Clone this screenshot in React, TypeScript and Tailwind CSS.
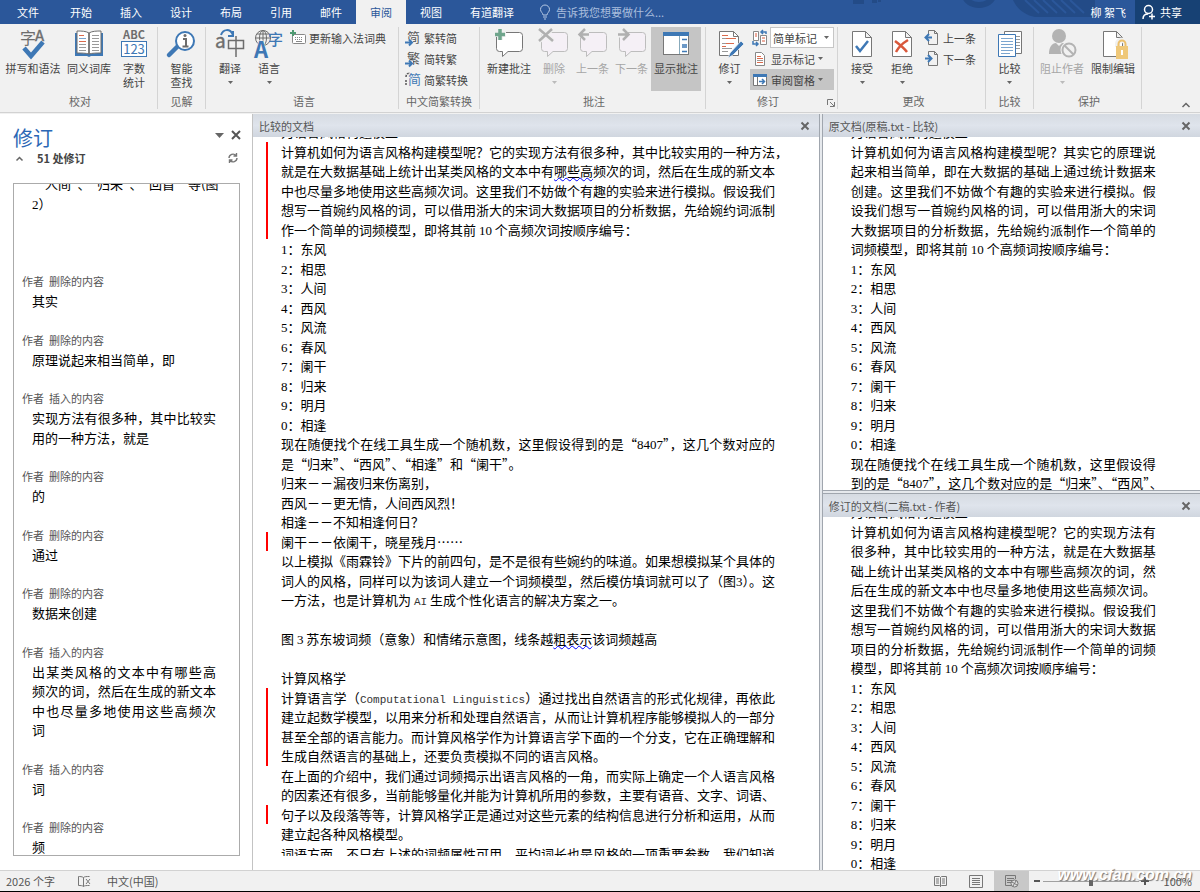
import React from "react";

type IconProps = { children: React.ReactNode; w?: number; h?: number; className?: string };

function Icon({ children, w = 34, h = 34, className = "" }: IconProps) {
  return (
    <svg width={w} height={h} viewBox={`0 0 ${w} ${h}`} fill="none" aria-hidden="true" className={`shrink-0 overflow-visible ${className}`}>
      {children}
    </svg>
  );
}

const GRAY = "#6d6d6d";
const BLUE = "#3e78b5";
const CJK = "'Noto Sans CJK SC', sans-serif";

const Caret = ({ color = "#666666" }: { color?: string }) => (
  <Icon w={5} h={3}>
    <path d="M0 0h5L2.5 3z" fill={color} />
  </Icon>
);

/* ---------- Large ribbon icons ---------- */

const SpellIcon = () => (
  <Icon>
    <text x="4" y="17" fontSize="16" fill={GRAY} fontFamily={CJK}>字</text>
    <text x="19" y="14" fontSize="15" fill={GRAY} stroke={GRAY} strokeWidth=".4" fontFamily={CJK}>A</text>
    <path d="M8 21l7 8L27 15" stroke="#f1f1f1" strokeWidth="6.500" />
    <path d="M8 21l7 8L27 15" stroke={BLUE} strokeWidth="4.500" />
  </Icon>
);

const BookIcon = () => (
  <Icon>
    <path d="M3 6h28v23H19l-2 1-2-1H3z" fill={BLUE} />
    <path d="M5 4c4 0 9 0 12 2v21c-3-1-8-1-12-1zM29 4c-4 0-9 0-12 2v21c3-1 8-1 12-1z" fill="#fff" stroke={GRAY} />
    <path d="M17 6v21" stroke={GRAY} />
    <path d="M7 17.500h7M20 8.500h7M20 11.500h7M20 14.500h7M20 17.500h7M20 20.500h7M7 20.500h7M7 23.500h7M20 23.500h7" stroke="#9a9a9a" />
    <path d="M7 8.500h5M7 14.500h7" stroke="#dc6b4c" />
    <path d="M7 11.500h7" stroke="#7ba5cf" />
  </Icon>
);

const CountIcon = () => (
  <Icon>
    <text x="17" y="12" textAnchor="middle" fontSize="11" fontWeight="700" fill={GRAY} fontFamily={CJK}>ABC</text>
    <rect x="4.5" y="14.5" width="25" height="15" fill="#fff" stroke={BLUE} />
    <text x="17" y="27" textAnchor="middle" fontSize="13" fill={BLUE} fontFamily={CJK}>123</text>
  </Icon>
);

const LookupIcon = () => (
  <Icon>
    <path d="M12 20l-8 8" stroke={BLUE} strokeWidth="4.5" strokeLinecap="round" />
    <circle cx="20" cy="14" r="9" fill="#fff" stroke={BLUE} strokeWidth="2" />
    <path d="M18 12h3v7M17.500 19.500h6" stroke={GRAY} strokeWidth="2" />
    <circle cx="20" cy="8.500" r="1.500" fill={GRAY} />
  </Icon>
);

const TranslateIcon = () => (
  <Icon>
    <text x="2" y="21" fontSize="19" fill={GRAY} stroke={GRAY} strokeWidth=".4" fontFamily={CJK}>a</text>
    <path d="M15.500 13.500h15v8h-15zM23 9v21" stroke={GRAY} strokeWidth="1.500" />
    <path d="M8 8c2-6 9-7 12 0M20 9v-5M21 9h-6" stroke={BLUE} strokeWidth="2" />
  </Icon>
);

const LanguageIcon = () => (
  <Icon>
    <circle cx="11" cy="11" r="7.500" stroke={GRAY} />
    <ellipse cx="11" cy="11" rx="3.500" ry="7.500" stroke={GRAY} />
    <path d="M3.500 11h15M5 7h12M11 3.500v15" stroke={GRAY} />
    <text x="2" y="31" fontSize="22" fontWeight="700" fill={BLUE} stroke="#f1f1f1" strokeWidth="1" paintOrder="stroke" fontFamily={CJK}>A</text>
    <text x="16" y="18" fontSize="15" fontWeight="500" fill={BLUE} fontFamily={CJK}>字</text>
  </Icon>
);

const BUBBLE = "M7.500 5.500h20a3 3 0 0 1 3 3v13a3 3 0 0 1-3 3H16l-5.500 5v-5h-3a3 3 0 0 1-3-3v-13a3 3 0 0 1 3-3z";

const NewCommentIcon = () => (
  <Icon>
    <path d={BUBBLE} fill="#fff" stroke="#777" />
    <path d="M8 1v12M2 7h12" stroke="#f1f1f1" strokeWidth="6" />
    <path d="M8 2v11M3 7.500h10" stroke="#6fa58c" strokeWidth="3.500" />
  </Icon>
);

const DeleteCommentIcon = () => (
  <Icon>
    <path d={BUBBLE} fill="#f5f0f6" stroke="#bdbdbd" />
    <path d="M2 2l14 12M15 2L2 14" stroke="#f1f1f1" strokeWidth="5" />
    <path d="M2 2l14 12M15 2L2 14" stroke="#b0b0b0" strokeWidth="2.500" />
  </Icon>
);

const PrevCommentIcon = () => (
  <Icon>
    <path d={BUBBLE} fill="#f5f0f6" stroke="#bdbdbd" />
    <path d="M4 7.500h9" stroke="#f1f1f1" strokeWidth="6" />
    <path d="M4 7.500h9M9 2L3.500 7.500 9 13" stroke="#b0b0b0" strokeWidth="2.500" />
  </Icon>
);

const NextCommentIcon = () => (
  <Icon>
    <path d={BUBBLE} fill="#f5f0f6" stroke="#bdbdbd" />
    <path d="M3 7.500h10" stroke="#f1f1f1" strokeWidth="6" />
    <path d="M3 7.500h10M8 2l5.500 5.500L8 13" stroke="#b0b0b0" strokeWidth="2.500" />
  </Icon>
);

const ShowCommentsIcon = () => (
  <Icon>
    <rect x="4.500" y="5.500" width="25" height="22" fill="#fff" stroke="#777" />
    <path d="M4 5h26v4H4z" fill={BLUE} />
    <path d="M20.500 9v18" stroke="#8ab" />
    <path d="M23 12.500h5M23 18h5M23 20h5M23 24.500h5" stroke={BLUE} strokeWidth="1.500" />
  </Icon>
);

const TrackIcon = () => (
  <Icon>
    <path d="M6.500 4.500h14l5 5v19h-19z" fill="#fff" stroke="#777" />
    <path d="M20.500 4.500v5h5" stroke="#777" />
    <path d="M9 11.500h4M9 16.500h4M9 21.500h10M9 24.500h6" stroke="#999" />
    <path d="M9 8.500h6M13 11.500h10M13 16.500h8M9 19.500h4" stroke="#dc6b4c" />
    <path d="M15 31l2-5L28 14l3 3-11 11z" fill={BLUE} stroke="#f1f1f1" strokeWidth=".8" />
  </Icon>
);

const PAGE = "M7.500 4.500h13l6 6v19h-19zM20.500 4.500v6h6";

const AcceptIcon = () => (
  <Icon>
    <path d={PAGE} fill="#fff" stroke="#777" />
    <path d="M11 19l4 5 8-10" stroke={BLUE} strokeWidth="2.500" />
  </Icon>
);

const RejectIcon = () => (
  <Icon>
    <path d={PAGE} fill="#fff" stroke="#777" />
    <path d="M10 14c4 3 9 7 12 11M23 13c-5 3-10 8-12 12" stroke="#d9583b" strokeWidth="2.500" />
  </Icon>
);

const CompareIcon = () => (
  <Icon>
    <path d="M11.500 4.500h17v22h-17z" fill="#fff" stroke="#777" />
    <path d="M23 9.500h4M23 12.500h4M23 15.500h4M23 18.500h4M23 21.500h4" stroke="#999" />
    <path d="M5.500 7.500h17v22h-17z" fill="#fff" stroke={BLUE} />
    <path d="M8 11.500h12M8 14.500h12M8 17.500h12M8 20.500h12M8 23.500h12M8 26.500h9" stroke="#7ba5cf" />
  </Icon>
);

const BlockIcon = () => (
  <Icon>
    <circle cx="14" cy="9" r="7" fill="#b3b3b3" />
    <path d="M4 27c0-7 3-11 7-11l3 3 3-3c3 0 5 2 6 4v7z" fill="#b3b3b3" />
    <circle cx="24" cy="23" r="8.500" fill="#f1f1f1" />
    <circle cx="24" cy="23" r="6.500" stroke="#b3b3b3" strokeWidth="2" />
    <path d="M19.500 18.500l9 9" stroke="#b3b3b3" strokeWidth="2" />
  </Icon>
);

const RestrictIcon = () => (
  <Icon>
    <path d="M7.500 4.500h13l6 6v19h-19zM20.500 4.500v6h6" fill="#fff" stroke="#777" />
    <path d="M21.500 20v-3a4 4 0 0 1 8 0v3" stroke="#f1f1f1" strokeWidth="5" />
    <path d="M22.500 20v-3a3.500 3.500 0 0 1 7 0v3" stroke="#ecc06c" strokeWidth="2" />
    <rect x="20" y="19" width="12" height="13" fill="#efc879" />
    <path d="M26 23v5" stroke="#fff" strokeWidth="2" />
  </Icon>
);

/* ---------- Small ribbon icons ---------- */

const KeyboardIcon = () => (
  <Icon w={16} h={16}>
    <rect x="2.500" y="4.500" width="13" height="9" rx="1" fill="#fff" stroke="#888" />
    <path d="M5 7.500h8M5 9.500h8" stroke="#888" strokeDasharray="1 1" />
    <path d="M6 11.500h6" stroke="#888" />
    <path d="M3 0v6M0 3h6" stroke="#4f9a72" strokeWidth="2" />
  </Icon>
);

function ConvertIcon({ glyph, kind }: { glyph: string; kind: "arrow" | "both" }) {
  return (
    <Icon w={16} h={16}>
      <text x={kind === "both" ? 3 : 2} y="12" fontSize="13" fill={kind === "both" ? BLUE : "#555"} fontFamily={CJK}>{glyph}</text>
      {kind === "arrow" ? (
        <>
          <path d="M0 12.500h8" stroke="#f1f1f1" strokeWidth="6" />
          <path d="M0 12.500h6M4 9.500l3 3-3 3" stroke={BLUE} strokeWidth="2" />
        </>
      ) : (
        <path d="M1 5c0-3 2-4 4-4M1 8v5" stroke="#555" strokeWidth="1.500" strokeDasharray="2 1" />
      )}
    </Icon>
  );
}

const MarkupIcon = () => (
  <Icon w={16} h={16}>
    <path d="M1.500 1.500h5v9h-5zM8.500 5.500h6v9h-6z" fill="#fff" stroke="#888" />
    <path d="M3 4h2M3 6h2M10 8h3M10 11h3" stroke="#d9583b" />
    <path d="M9 2h5v2M11 0L9 2l2 2M1 11v3h5M4 12l2 2-2 2" stroke={BLUE} strokeWidth="1.500" />
  </Icon>
);

const ShowMarkupIcon = () => (
  <Icon w={16} h={16}>
    <path d="M3.500 1.500h6l3 3v10h-9z" fill="#fff" stroke="#888" />
    <path d="M5 5.500h4M5 7.500h6M5 11.500h6" stroke="#dc6b4c" />
    <path d="M5 9.500h6" stroke="#999" />
  </Icon>
);

const PaneIcon = () => (
  <Icon w={16} h={16}>
    <path d="M1.500 2.500h13v11h-13z" fill="#fff" stroke="#777" />
    <path d="M1 2h14v3H1z" fill={BLUE} />
    <path d="M5.500 5v8" stroke="#777" />
    <path d="M7 9.500h5M10 7l2.500 2.500L10 12" stroke={BLUE} strokeWidth="1.500" />
  </Icon>
);

function PageArrowIcon({ dir }: { dir: "left" | "right" }) {
  return (
    <Icon w={16} h={16}>
      <path d="M4.500 4V.500h6l3 3v11h-9V11M10.500.500v3h3" stroke="#777" />
      {dir === "left" ? (
        <path d="M2 7.500h6M5 4L1.500 7.500 5 11" stroke={BLUE} strokeWidth="2" />
      ) : (
        <path d="M1 7.500h6M4 4l3.500 3.500L4 11" stroke={BLUE} strokeWidth="2" />
      )}
    </Icon>
  );
}

/* ---------- Ribbon building blocks ---------- */

type BigProps = { icon: React.ReactNode; label: string; second?: string; caret?: boolean; width: string; disabled?: boolean; active?: boolean };

function BigButton({ icon, label, second, caret, width, disabled, active }: BigProps) {
  return (
    <button
      disabled={disabled}
      className={`flex h-16 shrink-0 flex-col items-center whitespace-nowrap ${width} ${disabled ? "text-[#a6a6a6]" : "text-[#444444]"} ${active ? "bg-[#c5c5c5]" : ""}`}
    >
      {icon}
      <span className="leading-[14px]">{label}</span>
      {second && <span className="leading-[14px]">{second}</span>}
      {caret && (
        <span className="flex h-[14px] items-center">
          <Caret color={disabled ? "#bbbbbb" : "#666666"} />
        </span>
      )}
    </button>
  );
}

function SmallButton({ icon, label, caret, active }: { icon: React.ReactNode; label: string; caret?: boolean; active?: boolean }) {
  return (
    <button className={`flex h-[21px] items-center gap-[3px] whitespace-nowrap pl-[2px] pr-1 ${active ? "bg-[#c5c5c5]" : ""}`}>
      {icon}
      <span>{label}</span>
      {caret && <Caret />}
    </button>
  );
}

function Group({ title, width, children, corner }: { title: string; width: string; children: React.ReactNode; corner?: boolean }) {
  return (
    <section aria-label={title} className={`flex shrink-0 flex-col py-[3px] ${width}`}>
      <div className="flex grow flex-col border-r border-[#d4d4d4]">
        <div className="flex grow items-start">{children}</div>
        <div className="flex h-4 items-center">
          <span className="grow text-center text-[#666666]">{title}</span>
          {corner && (
            <button aria-label="修订选项" className="mr-[2px] mt-1">
              <Icon w={8} h={8}>
                <path d="M.5 6V.5H6M3 3l4 4M7.500 3v4.500H3" stroke="#777" />
              </Icon>
            </button>
          )}
        </div>
      </div>
    </section>
  );
}

/* ---------- Title bar ---------- */

const TABS = ["开始", "插入", "设计", "布局", "引用", "邮件", "审阅", "视图"];

function TitleBar() {
  return (
    <header className="relative flex h-6 shrink-0 items-stretch bg-[#2b579a] text-white">
      <svg className="pointer-events-none absolute right-[65px] top-0" width="300" height="24" aria-hidden="true">
        <g fill="#234b87">
          <path d="M18 0h11v4H18zM37 0h5v3h-5zM43 0h3v2h-3z" />
          <path d="M178 0h82v17h-60c-10-2-18-8-22-17z" />
        </g>
        <path d="M130 -5a14 10 0 0 0 28 0" stroke="#234b87" strokeWidth="6" fill="none" />
        <path d="M190 0l14 13M199 0l14 13M208 0l14 13M217 0l14 13M226 0l14 13M235 0l14 13" stroke="#2b579a" strokeWidth="2" />
      </svg>
      <nav className="flex" aria-label="功能区">
        <button className="w-14">文件</button>
        {TABS.map((t) => (
          <button key={t} className={`w-[50px] ${t === "审阅" ? "bg-[#f1f1f1] text-[#2b579a]" : ""}`}>
            {t}
          </button>
        ))}
        <button className="w-[72px]">有道翻译</button>
      </nav>
      <label className="flex grow items-center gap-[6px] pl-[12px]">
        <Icon w={10} h={15}>
          <path d="M3 10c0-2-2.500-3-2.500-5.500a4.500 4.500 0 0 1 9 0C9.500 7 7 8 7 10zM3 12h4M4 14h2" stroke="#b5c8e3" />
        </Icon>
        <input
          aria-label="操作说明搜索"
          placeholder="告诉我您想要做什么..."
          className="h-5 w-40 bg-transparent placeholder:text-[#a9bedd] focus:outline-none"
        />
      </label>
      <button className="relative px-[9px]">柳 絮飞</button>
      <button className="relative flex w-[65px] items-center gap-1 bg-[#174174] pl-[7px]">
        <Icon w={14} h={16}>
          <circle cx="6.500" cy="5.500" r="4" stroke="#fff" strokeWidth="1.500" />
          <path d="M1 15c0-3 2-5 5-5M7 12.500h6M10 9.500v6" stroke="#fff" strokeWidth="1.500" />
        </Icon>
        共享
      </button>
    </header>
  );
}

function Ribbon() {
  return (
    <div className="relative flex h-[89px] shrink-0 border-b border-[#d2d2d2] bg-[#f1f1f1] text-[#444444]">
      <Group title="校对" width="w-[158px] pl-[3px]">
        <BigButton width="w-[60px]" icon={<SpellIcon />} label="拼写和语法" />
        <BigButton width="w-[52px]" icon={<BookIcon />} label="同义词库" />
        <BigButton width="w-[38px]" icon={<CountIcon />} label="字数" second="统计" />
      </Group>
      <Group title="见解" width="w-12">
        <BigButton width="w-full" icon={<LookupIcon />} label="智能" second="查找" />
      </Group>
      <Group title="语言" width="w-[193px] pl-1">
        <BigButton width="w-[40px]" icon={<TranslateIcon />} label="翻译" caret />
        <BigButton width="w-[38px]" icon={<LanguageIcon />} label="语言" caret />
        <SmallButton icon={<KeyboardIcon />} label="更新输入法词典" />
      </Group>
      <Group title="中文简繁转换" width="w-[81px]">
        <div className="flex flex-col pl-1">
          <SmallButton icon={<ConvertIcon glyph="简" kind="arrow" />} label="繁转简" />
          <SmallButton icon={<ConvertIcon glyph="繁" kind="arrow" />} label="简转繁" />
          <SmallButton icon={<ConvertIcon glyph="简" kind="both" />} label="简繁转换" />
        </div>
      </Group>
      <Group title="批注" width="w-[226px] pl-[3px]">
        <BigButton width="w-[52px]" icon={<NewCommentIcon />} label="新建批注" />
        <BigButton width="w-[38px]" icon={<DeleteCommentIcon />} label="删除" caret disabled />
        <BigButton width="w-[39px]" icon={<PrevCommentIcon />} label="上一条" disabled />
        <BigButton width="w-[39px]" icon={<NextCommentIcon />} label="下一条" disabled />
        <BigButton width="w-[50px]" icon={<ShowCommentsIcon />} label="显示批注" active />
      </Group>
      <Group title="修订" width="w-[132px] pl-[3px]" corner>
        <BigButton width="w-[41px]" icon={<TrackIcon />} label="修订" caret />
        <div className="flex w-[84px] flex-col">
          <div className="flex h-[21px] items-center gap-[2px] pl-[2px]">
            <MarkupIcon />
            <span className="grid h-[21px] grow grid-cols-1 items-center border border-[#c6c6c6] bg-white">
              <select aria-label="显示以供审阅" className="col-start-1 row-start-1 w-full appearance-none bg-transparent pl-[2px] focus:outline-none">
                <option>简单标记</option>
                <option>所有标记</option>
              </select>
              <span className="pointer-events-none col-start-1 row-start-1 justify-self-end pr-1">
                <Caret />
              </span>
            </span>
          </div>
          <SmallButton icon={<ShowMarkupIcon />} label="显示标记" caret />
          <SmallButton icon={<PaneIcon />} label="审阅窗格" caret active />
        </div>
      </Group>
      <Group title="更改" width="w-[148px] pl-1">
        <BigButton width="w-10" icon={<AcceptIcon />} label="接受" caret />
        <BigButton width="w-10" icon={<RejectIcon />} label="拒绝" caret />
        <div className="flex flex-col">
          <SmallButton icon={<PageArrowIcon dir="left" />} label="上一条" />
          <SmallButton icon={<PageArrowIcon dir="right" />} label="下一条" />
        </div>
      </Group>
      <Group title="比较" width="w-12">
        <BigButton width="w-full" icon={<CompareIcon />} label="比较" caret />
      </Group>
      <Group title="保护" width="w-[108px] pl-[3px]">
        <BigButton width="w-[50px]" icon={<BlockIcon />} label="阻止作者" caret disabled />
        <BigButton width="w-[52px]" icon={<RestrictIcon />} label="限制编辑" />
      </Group>
      <button aria-label="折叠功能区" className="mb-1 ml-auto mr-[10px] self-end">
        <Icon w={8} h={6}>
          <path d="M.5 5L4 1.500 7.500 5" stroke="#666" strokeWidth="1.500" />
        </Icon>
      </button>
    </div>
  );
}

/* ---------- Document text ---------- */

/* Letters and digits are set in half-width faces; [[...]] marks a wavy underline. */
function Rich({ text }: { text: string }) {
  const parts = text.split(/(\[\[.+?\]\]|[A-Za-z]+(?: [A-Za-z]+)*|[0-9]+)/);
  return (
    <>
      {parts.map((p, i) => {
        if (p.startsWith("[["))
          return (
            <span key={i} className="underline decoration-[#0000ff] decoration-wavy decoration-1 underline-offset-1">
              {p.slice(2, -2)}
            </span>
          );
        if (/^[A-Za-z]/.test(p))
          return (
            <span key={i} className="font-['Liberation_Mono',monospace] text-[11px] text-[#333333]">
              {p}
            </span>
          );
        if (/^[0-9]/.test(p))
          return (
            <span key={i} className="font-['Liberation_Serif',serif]">
              {p}
            </span>
          );
        return p;
      })}
    </>
  );
}

/* fill: the row runs the full measure; mark: change bar in the margin */
type Row = { t: string; fill?: boolean; mark?: boolean };

const f = (t: string, mark = false): Row => ({ t, fill: true, mark });
const n = (t: string, mark = false): Row => ({ t, mark });

const WORDS: Row[] = ["1：东风", "2：相思", "3：人间", "4：西风", "5：风流", "6：春风", "7：阑干", "8：归来", "9：明月", "0：相逢"].map((t) => n(t));

const COMPARED: Row[] = [
  n("为语言风格构造模型"),
  f("计算机如何为语言风格构建模型呢？它的实现方法有很多种，其中比较实用的一种方法，", true),
  f("就是在大数据基础上统计出某类风格的文本中有[[哪些高]]频次的词，然后在生成的新文本", true),
  f("中也尽量多地使用这些高频次词。这里我们不妨做个有趣的实验来进行模拟。假设我们", true),
  f("想写一首婉约风格的词，可以借用浙大的宋词大数据项目的分析数据，先给婉约词派制", true),
  n("作一个简单的词频模型，即将其前 10 个高频次词按顺序编号：", true),
  ...WORDS,
  f("现在随便找个在线工具生成一个随机数，这里假设得到的是“8407”，这几个数对应的"),
  n("是“归来”、“西风”、“相逢”和“阑干”。"),
  n("归来－－漏夜归来伤离别，"),
  n("西风－－更无情，人间西风烈！"),
  n("相逢－－不知相逢何日？"),
  n("阑干－－依阑干，晓星残月……", true),
  f("以上模拟《雨霖铃》下片的前四句，是不是很有些婉约的味道。如果想模拟某个具体的"),
  f("词人的风格，同样可以为该词人建立一个词频模型，然后模仿填词就可以了（图3）。这"),
  n("一方法，也是计算机为 AI 生成个性化语言的解决方案之一。"),
  n(""),
  n("图 3 苏东坡词频（意象）和情绪示意图，线条越[[粗表示]]该词频越高"),
  n(""),
  n("计算风格学"),
  f("计算语言学（Computational Linguistics）通过找出自然语言的形式化规律，再依此", true),
  f("建立起数学模型，以用来分析和处理自然语言，从而让计算机程序能够模拟人的一部分", true),
  f("甚至全部的语言能力。而计算风格学作为计算语言学下面的一个分支，它在正确理解和", true),
  n("生成自然语言的基础上，还要负责模拟不同的语言风格。", true),
  f("在上面的介绍中，我们通过词频揭示出语言风格的一角，而实际上确定一个人语言风格"),
  f("的因素还有很多，当前能够量化并能为计算机所用的参数，主要有语音、文字、词语、"),
  f("句子以及段落等等，计算风格学正是通过对这些元素的结构信息进行分析和运用，从而", true),
  n("建立起各种风格模型。"),
  f("词语方面，不只有上述的词频属性可用，平均词长也是风格的一项重要参数，我们知道"),
];

const ORIGINAL: Row[] = [
  n("为语言风格构造模型"),
  f("计算机如何为语言风格构建模型呢？其实它的原理说"),
  f("起来相当简单，即在大数据的基础上通过统计数据来"),
  f("创建。这里我们不妨做个有趣的实验来进行模拟。假"),
  f("设我们想写一首婉约风格的词，可以借用浙大的宋词"),
  f("大数据项目的分析数据，先给婉约派制作一个简单的"),
  n("词频模型，即将其前 10 个高频词按顺序编号："),
  ...WORDS,
  f("现在随便找个在线工具生成一个随机数，这里假设得"),
  f("到的是“8407”，这几个数对应的是“归来”、“西风”、"),
];

const REVISED: Row[] = [
  n("为语言风格构造模型"),
  f("计算机如何为语言风格构建模型呢？它的实现方法有"),
  f("很多种，其中比较实用的一种方法，就是在大数据基"),
  f("础上统计出某类风格的文本中有哪些高频次的词，然"),
  f("后在生成的新文本中也尽量多地使用这些高频次词。"),
  f("这里我们不妨做个有趣的实验来进行模拟。假设我们"),
  f("想写一首婉约风格的词，可以借用浙大的宋词大数据"),
  f("项目的分析数据，先给婉约词派制作一个简单的词频"),
  n("模型，即将其前 10 个高频次词按顺序编号："),
  ...WORDS,
];

function Lines({ rows, measure }: { rows: Row[]; measure: string }) {
  return (
    <div className={`-mt-[15px] text-[13px] text-black ${measure}`}>
      {rows.map((r, i) => (
        <p
          key={i}
          className={`whitespace-nowrap border-l-2 pl-[13px] odd:h-5 odd:leading-5 even:h-[19px] even:leading-[19px] ${r.mark ? "border-[#ff0000]" : "border-transparent"} ${r.fill ? "[text-align-last:justify]" : ""}`}
        >
          <Rich text={r.t} />
        </p>
      ))}
    </div>
  );
}

function CloseIcon() {
  return (
    <Icon w={10} h={10}>
      <path d="M1.500 1.500l7 7M8.500 1.500l-7 7" stroke="#666" strokeWidth="2" />
    </Icon>
  );
}

function DocPane({ title, children }: { title: string; children: React.ReactNode }) {
  return (
    <section className="flex min-h-0 min-w-0 flex-1 flex-col bg-white">
      <div className="flex h-[23px] shrink-0 items-center justify-between bg-linear-to-b from-[#d6dbe2] via-[#dfe4ec] to-[#d0d6df] pl-[6px] pr-[9px] text-[#555555]">
        <h2>{title}</h2>
        <button aria-label={`关闭${title}`}>
          <CloseIcon />
        </button>
      </div>
      {children}
    </section>
  );
}

/* ---------- Revision pane ---------- */

type Rev = { kind: string; body: string[] };

const REVS: Rev[] = [
  { kind: "删除的内容", body: ["其实"] },
  { kind: "删除的内容", body: ["原理说起来相当简单，即"] },
  { kind: "插入的内容", body: ["实现方法有很多种，其中比较实", "用的一种方法，就是"] },
  { kind: "删除的内容", body: ["的"] },
  { kind: "删除的内容", body: ["通过"] },
  { kind: "删除的内容", body: ["数据来创建"] },
  { kind: "插入的内容", body: ["出某类风格的文本中有哪些高", "频次的词，然后在生成的新文本", "中也尽量多地使用这些高频次", "词"] },
  { kind: "插入的内容", body: ["词"] },
  { kind: "删除的内容", body: ["频"] },
];

const REV_ROWS: { head?: boolean; t: string; fill?: boolean }[] = [
  { t: "“人间”、“归来”、“回首”等(图", fill: true },
  { t: "2）" },
  { t: "" },
  { t: "" },
  { t: "" },
  ...REVS.flatMap((r) => [
    { head: true, t: `作者  ${r.kind}` },
    ...r.body.map((t, i) => ({ t, fill: i < r.body.length - 1 })),
    { t: "" },
  ]),
];

function RevisionPane() {
  return (
    <aside className="flex w-[253px] shrink-0 flex-col border-r border-[#c3c3c3] bg-white pb-[14px] pl-[13px] pr-3 pt-3">
      <div className="flex h-6 items-start">
        <h1 className="grow text-[20px] leading-6 text-[#2b67b5]">修订</h1>
        <button aria-label="窗格选项" className="mr-[7px] flex h-[18px] items-center">
          <Icon w={9} h={5}>
            <path d="M0 0h9L4.500 5z" fill="#666" />
          </Icon>
        </button>
        <button aria-label="关闭" className="-mr-px flex h-[18px] items-center">
          <Icon w={10} h={10}>
            <path d="M1 1l8 8M9 1L1 9" stroke="#555" strokeWidth="2" />
          </Icon>
        </button>
      </div>
      <div className="flex h-4 items-center pl-[3px]">
        <button aria-label="折叠">
          <Icon w={7} h={5}>
            <path d="M.5 4.500l3-3 3 3" stroke="#666" strokeWidth="1.500" />
          </Icon>
        </button>
        <span className="ml-[14px] grow font-bold text-[#444444]">51 处修订</span>
        <button aria-label="刷新" className="mr-[2px]">
          <Icon w={10} h={10}>
            <path d="M1 5a4 4 0 0 1 7-2.500M9 5a4 4 0 0 1-7 2.500M8.500 0v3h-3M1.500 10V7h3" stroke="#777" strokeWidth="1.400" />
          </Icon>
        </button>
      </div>
      <div className="mt-[17px] min-h-0 grow overflow-hidden border border-[#ababab] pl-2">
        <div className="-mt-[10px] w-[194px] text-[13px] text-black">
          {REV_ROWS.map((r, i) => (
            <p
              key={i}
              className={`whitespace-pre odd:h-5 odd:leading-5 even:h-[19px] even:leading-[19px] ${r.head ? "text-[11px] text-[#555555]" : "pl-[10px]"} ${r.fill ? "[text-align-last:justify]" : ""}`}
            >
              {r.head ? r.t : <Rich text={r.t} />}
            </p>
          ))}
        </div>
      </div>
    </aside>
  );
}

function StatusBar() {
  return (
    <footer className="relative flex h-[22px] shrink-0 items-stretch border-b border-t border-b-black border-t-[#d2d2d2] bg-[#f1f1f1] text-[#555555]">
      <span className="flex w-[77px] items-center pl-[6px]">2026 个字</span>
      <button aria-label="校对" className="flex w-[30px] items-center">
        <Icon w={15} h={13}>
          <path d="M6.500 2.500C5 1.500 3 1.500 1.500 1.500v9c2 0 4 0 5 1zM6.500 2.500c1-1 3-1 6-1M6.500 11.500c1-1 3-1 6-1M9 4l4 5M13 4L9 9" stroke="#777" />
        </Icon>
      </button>
      <button className="grow text-left">中文(中国)</button>
      <button aria-label="阅读视图" className="flex w-[36px] items-center justify-center">
        <Icon w={13} h={13}>
          <path d="M6.500 2.500l-1-1h-5v9h5l1 1 1-1h5v-9h-5zM6.500 2.500v9M2 4h3M2 6h3M2 8h3M8 4h3M8 6h3M8 8h3" stroke="#777" />
        </Icon>
      </button>
      <button aria-label="页面视图" className="flex w-[36px] items-center justify-center">
        <Icon w={14} h={13}>
          <path d="M.5.5h13v12H.5zM3 3.500h8M3 5.500h8M3 7.500h8M3 9.500h8" stroke="#777" />
        </Icon>
      </button>
      <button aria-label="Web 版式视图" className="flex w-[35px] items-center justify-center bg-[#c8c8c8]">
        <Icon w={14} h={13}>
          <path d="M7 10.500H.5V.500h10V4M2 3.500h7M2 5.500h5M2 7.500h4" stroke="#777" />
          <circle cx="9.500" cy="8.500" r="3.500" fill="#ddd" stroke="#777" />
          <path d="M7 7l5 3M8 11l3-5" stroke="#777" />
        </Icon>
      </button>
      <div className="flex items-center gap-[2px] pl-1">
        <button aria-label="缩小" className="w-2">
          <Icon w={8} h={8}>
            <path d="M1 4h6" stroke="#555" strokeWidth="2" />
          </Icon>
        </button>
        <input
          type="range"
          aria-label="缩放"
          defaultValue={50}
          className="h-4 w-[96px] appearance-none bg-[linear-gradient(#a0a0a0,#a0a0a0)] bg-[length:100%_1px] bg-center bg-no-repeat [&::-webkit-slider-thumb]:h-[10px] [&::-webkit-slider-thumb]:w-1 [&::-webkit-slider-thumb]:appearance-none [&::-webkit-slider-thumb]:bg-[#666666]"
        />
        <button aria-label="放大" className="w-2">
          <Icon w={8} h={8}>
            <path d="M0 4h8M4 0v8" stroke="#555" strokeWidth="2" />
          </Icon>
        </button>
      </div>
      <span className="relative z-10 flex w-[51px] items-center justify-end pr-2">100%</span>
      <span className="pointer-events-none absolute -top-[6px] right-2 whitespace-nowrap font-['Liberation_Sans',sans-serif] text-[16px] font-bold italic leading-5 text-white [text-shadow:1px_1px_1px_#777]">
        www.cfan.com.cn
      </span>
    </footer>
  );
}

export default function App() {
  return (
    <div lang="zh-CN" className="flex h-screen flex-col overflow-hidden bg-[#f1f1f1] font-['Noto_Sans_CJK_SC',sans-serif] text-[11px] leading-4">
      <TitleBar />
      <Ribbon />
      <main className="flex min-h-0 grow pt-px">
        <RevisionPane />
        <div className="flex min-w-0 flex-[3]">
          <DocPane title="比较的文档">
            <div className="mb-[14px] min-h-0 grow overflow-hidden pl-[13px]">
              <Lines rows={COMPARED} measure="w-[509px]" />
            </div>
          </DocPane>
        </div>
        <div className="w-1 shrink-0 border-x border-[#a0a6ae] bg-[#e6e9ed]" />
        <div className="flex min-w-0 flex-[2] flex-col">
          <DocPane title="原文档(原稿.txt - 比较)">
            <div className="min-h-0 grow overflow-hidden pl-[13px]">
              <Lines rows={ORIGINAL} measure="w-80" />
            </div>
          </DocPane>
          <div className="h-1 shrink-0 border-y border-[#a0a6ae] bg-[#e6e9ed]" />
          <DocPane title="修订的文档(二稿.txt - 作者)">
            <div className="min-h-0 grow overflow-hidden pl-[13px]">
              <Lines rows={REVISED} measure="w-80" />
            </div>
          </DocPane>
        </div>
      </main>
      <StatusBar />
    </div>
  );
}
